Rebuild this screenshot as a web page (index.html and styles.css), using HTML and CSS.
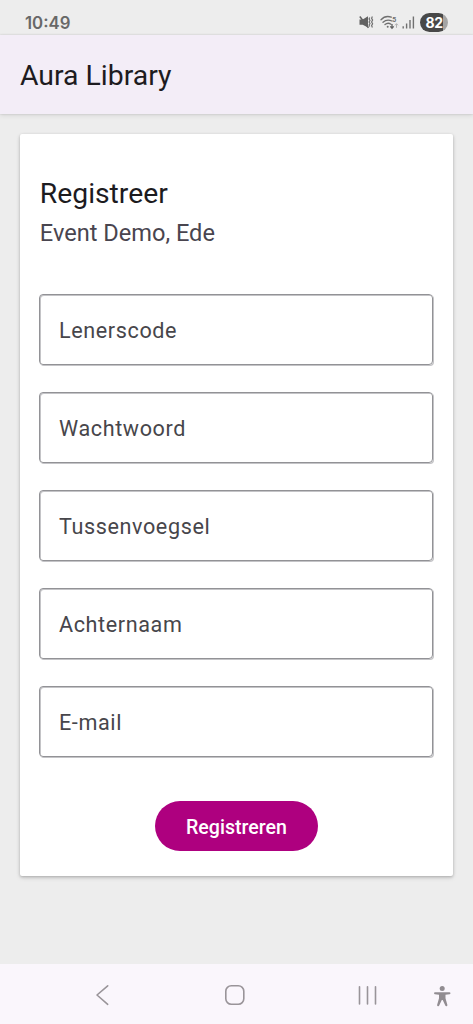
FILE: index.html
```html
<!DOCTYPE html>
<html lang="nl">
<head>
<meta charset="utf-8">
<title>Aura Library</title>
<link rel="stylesheet" href="styles.css">
</head>
<body>
<div class="screen">
  <div class="status-bar">
    <span class="clock">10:49</span>
    <div class="status-icons">
      <svg class="mute" width="15" height="14" viewBox="0 0 15 14">
        <path d="M.5 4.500h3.200L9 1.200v11.300L3.700 9.800H.5z" fill="#626262"/>
        <path d="M.8 1.500 9.500 12.800" stroke="#626262" stroke-width="1.500"/>
        <path d="M10.700 2.500l-.6 1.500.9 1.500-.9 1.500.9 1.500-.9 1.500.6 1.500M13.400 1.500l-.8 1.800 1 1.800-1 1.900 1 1.800-1 1.800.8 1.800" fill="none" stroke="#707070" stroke-width="1.200"/>
      </svg>
      <svg class="wifi" width="19" height="15" viewBox="0 0 19 15">
        <g fill="none" stroke="#707070" stroke-width="1.300" stroke-linecap="round">
          <path d="M1 4.800C4 1.500 8 1 11.300 2.200M3 7.300C5.500 4.900 9 4.600 12 6M5 9.600c1.800-1.600 4-1.700 6-.4"/>
        </g>
        <circle cx="7.700" cy="11.800" r="1" fill="#707070"/>
        <path d="M12 9v4M10.300 11.400l1.700 1.800 1.700-1.800" fill="none" stroke="#606060" stroke-width="1.300"/>
        <path d="M16.500 12.800v-4M15 10.300l1.500-1.600 1.500 1.600" fill="none" stroke="#b0b0b0" stroke-width="1"/>
        <text x="12.300" y="6.800" class="band">5</text>
      </svg>
      <svg class="signal" width="13" height="13" viewBox="0 0 13 13">
        <path d="M1.200 10.300v2.200M4.600 7.500v5M8 4v8.500M11.400.5v12" stroke="#707070" stroke-width="1.400"/>
      </svg>
      <span class="battery">82</span>
    </div>
  </div>
  <header class="app-bar">Aura Library</header>
  <main class="content">
    <form class="card">
      <h1 class="title">Registreer</h1>
      <p class="subtitle">Event Demo, Ede</p>
      <div class="fields">
        <div class="field">Lenerscode</div>
        <div class="field">Wachtwoord</div>
        <div class="field">Tussenvoegsel</div>
        <div class="field">Achternaam</div>
        <div class="field">E-mail</div>
      </div>
      <button class="submit" type="button">Registreren</button>
    </form>
  </main>
  <nav class="nav-bar">
    <svg viewBox="0 0 473 60" width="473" height="60">
      <g fill="none" stroke="#999499" stroke-width="1.600" stroke-linecap="round" stroke-linejoin="round">
        <path d="M107.700 21.800 97 31l10.700 9.300"/>
        <rect x="225.800" y="21.800" width="18" height="18.500" rx="5.500"/>
        <path d="M359.500 22.800v17.200M367.500 22.800v17.200M375.500 22.800v17.200"/>
      </g>
      <g fill="#918c91">
        <circle cx="442.200" cy="24.500" r="2.500"/>
        <path d="M435 28.300h14.500a.9.900 0 0 1 0 1.900L445.500 30.800v3.500l1.900 6.700a1.100 1.100 0 0 1-2.100.6l-2.600-5.700h-.9l-2.600 5.700a1.100 1.100 0 0 1-2.100-.6l1.900-6.700v-3.500L435 30.200a.9.900 0 0 1 0-1.900z"/>
      </g>
    </svg>
  </nav>
</div>
</body>
</html>
```
FILE: styles.css
```css
* {
  box-sizing: border-box;
}

body {
  margin: 0;
  font-family: Roboto, "Noto Sans", sans-serif;
}

.screen {
  display: flex;
  flex-direction: column;
  width: 473px;
  height: 1024px;
  overflow: hidden;
  background: #ededed;
}

.status-bar {
  display: flex;
  justify-content: space-between;
  align-items: center;
  height: 35px;
  padding: 9px 25px 0 25px;
}

.clock {
  padding-top: 1px;
  font-family: Inter, sans-serif;
  font-size: 16.8px;
  font-weight: 600;
  line-height: 26px;
  color: #686868;
}

.status-icons {
  display: flex;
  align-items: center;
}

.wifi {
  margin-left: 6px;
}

.band {
  font: 700 7px Roboto, sans-serif;
  fill: #707070;
}

.signal {
  margin-left: 3px;
}

.battery {
  width: 28px;
  height: 19px;
  margin-left: 5px;
  border-radius: 10px;
  background: linear-gradient(90deg, #484848 82%, #a5a5a5 82%);
  color: #fff;
  font: 700 14px/19px Inter, sans-serif;
  letter-spacing: -.4px;
  text-align: center;
}

.app-bar {
  height: 79px;
  padding-left: 20px;
  background: #f3edf7;
  box-shadow: 0 0 2px rgba(0, 0, 0, .16), 0 2px 5px rgba(0, 0, 0, .08);
  color: #1d1b20;
  font-size: 28.4px;
  line-height: 81px;
}

.content {
  flex: 1;
  padding: 20px 20px 0;
}

.card {
  display: flex;
  flex-direction: column;
  height: 742px;
  padding: 40px 20px 0 19px;
  border-radius: 2px;
  background: #fff;
  box-shadow: 0 1px 3px rgba(0, 0, 0, .22), 0 2px 5px rgba(0, 0, 0, .1);
}

.title {
  margin: 0;
  padding-left: .8px;
  color: #1c1b1f;
  font-size: 28.3px;
  font-weight: 400;
  line-height: 40px;
}

.subtitle {
  margin: 0;
  padding-left: .8px;
  color: #49454f;
  font-size: 23.6px;
  line-height: 39px;
}

.fields {
  display: flex;
  flex-direction: column;
  gap: 27px;
  margin-top: 41px;
}

.field {
  height: 71px;
  padding-left: 19px;
  border: 1px solid #929296;
  border-radius: 4px;
  box-shadow: inset 1px 1px #c4c4c7, 1px 1px #c4c4c7;
  color: #47464b;
  font-size: 21.6px;
  letter-spacing: .6px;
  line-height: 71px;
}

.submit {
  align-self: center;
  width: 163px;
  height: 50px;
  margin-top: 44px;
  padding: 4px 0 0 1px;
  border: 0;
  border-radius: 25px;
  background: #ae007f;
  color: #fff;
  font: 500 19.6px/46px Roboto, sans-serif;
}

.nav-bar {
  height: 60px;
  background: #faf6fc;
}

.nav-bar svg {
  display: block;
}
```
